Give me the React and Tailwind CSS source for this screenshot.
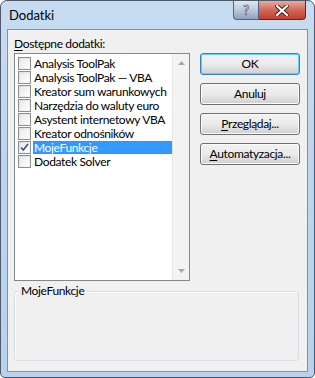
const items = [
  { name: "Analysis ToolPak", checked: false },
  { name: "Analysis ToolPak — VBA", checked: false },
  { name: "Kreator sum warunkowych", checked: false },
  { name: "Narzędzia do waluty euro", checked: false },
  { name: "Asystent internetowy VBA", checked: false },
  { name: "Kreator odnośników", checked: false },
  { name: "MojeFunkcje", checked: true, selected: true },
  { name: "Dodatek Solver", checked: false },
];

function Checkbox({ checked }) {
  return (
    <div className="w-[13px] h-[13px] border border-[#8f8f8f] bg-gradient-to-br from-[#dcdcdc] to-[#fbfbfb] flex items-center justify-center shrink-0">
      <div className="w-[9px] h-[9px] bg-gradient-to-br from-[#e9e9e9] to-[#ffffff] flex items-center justify-center">
        {checked && (
          <svg width="9" height="9" viewBox="0 0 9 9">
            <path d="M1 4.5 L3.3 7 L8 1" fill="none" stroke="#3c4f8c" strokeWidth="1.6" />
          </svg>
        )}
      </div>
    </div>
  );
}

function Button({ children, primary }) {
  return (
    <div
      className={
        "w-[100px] h-[22px] rounded-[3px] border flex items-center justify-center text-[12px] leading-[14px] text-black bg-gradient-to-b from-[#f2f2f2] via-[#ebebeb] to-[#cfcfcf] " +
        (primary ? "border-[#3c7fb1] shadow-[inset_0_0_0_1px_#5fd0f5]" : "border-[#707070] shadow-[inset_0_0_0_1px_#fbfbfb]")
      }
    >
      {children}
    </div>
  );
}

export default function App() {
  return (
    <div className="w-[315px] h-[378px] bg-white tracking-[-0.35px]" style={{ fontFamily: 'Lato, "Open Sans", sans-serif' }}>
      <div className="w-[315px] h-[378px] rounded-t-[7px] rounded-b-[5px] border border-[#4d5a69] bg-gradient-to-b from-[#c7dcf1] via-[#bcd4ec] to-[#b9d1ea] flex flex-col relative overflow-hidden">
        <div className="h-[28px] flex items-start pl-[8px] pt-[7px] text-[13px] leading-[14px] tracking-normal text-black">Dodatki</div>

        <div className="absolute top-0 right-[8px] flex">
          <div className="w-[26px] h-[19px] rounded-bl-[4px] border border-t-0 border-[#53647a] bg-gradient-to-b from-[#dfe8f2] via-[#b8c9dc] to-[#8aa3c0] flex items-center justify-center">
            <span className="text-[13px] font-bold text-white leading-none [-webkit-text-stroke:0.6px_#2d3c52]">?</span>
          </div>
          <div className="w-[47px] h-[19px] rounded-br-[4px] border border-t-0 border-l-0 border-[#5a2a2a] bg-gradient-to-b from-[#e9a99c] via-[#d2675a] to-[#c43d2a] flex items-center justify-center">
            <svg width="14" height="11" viewBox="0 0 14 11">
              <path d="M2 1 L12 10 M12 1 L2 10" stroke="#3a2020" strokeWidth="4" strokeLinecap="square" />
              <path d="M2 1 L12 10 M12 1 L2 10" stroke="#ffffff" strokeWidth="2.2" strokeLinecap="square" />
            </svg>
          </div>
        </div>

        <div className="mx-[6px] h-[343px] border border-[#8491a1] bg-[#f0f0f0] flex flex-col pl-[6px] pr-[7px]">
          <div className="h-[23px] pt-[7px] text-[12px] leading-[14px] text-black">
            <span className="underline underline-offset-2">D</span>ostępne dodatki:
          </div>
          <div className="flex gap-[10px]">
            <div className="w-[176px] h-[228px] border border-[#828790] bg-white flex">
              <div className="flex-1 pt-[2px] pl-[2px]">
                {items.map((it) => (
                  <div key={it.name} className="h-[14px] flex items-center">
                    <div className="w-[14px] flex justify-center">
                      <Checkbox checked={it.checked} />
                    </div>
                    <div
                      className={
                        "ml-[2px] flex-1 h-[13px] flex items-center pl-[1px] text-[12px] leading-[13px] whitespace-nowrap " +
                        (it.selected ? "bg-[#3399ff] text-white outline outline-1 outline-dotted outline-[#cc6633] -outline-offset-1" : "text-black")
                      }
                    >
                      {it.name}
                    </div>
                  </div>
                ))}
              </div>
              <div className="w-[17px] bg-[#f3f3f3] border-l border-[#e6e6e6] flex flex-col justify-between items-center py-[7px]">
                <svg width="7" height="4" viewBox="0 0 7 4"><path d="M0 4 L3.5 0 L7 4 Z" fill="#a8a8a8" /></svg>
                <svg width="7" height="4" viewBox="0 0 7 4"><path d="M0 0 L3.5 4 L7 0 Z" fill="#a8a8a8" /></svg>
              </div>
            </div>
            <div className="flex flex-col gap-[8px]">
              <Button primary>OK</Button>
              <Button>Anuluj</Button>
              <Button>
                <span><span className="underline underline-offset-2">P</span>rzeglądaj...</span>
              </Button>
              <Button>
                <span><span className="underline underline-offset-2">A</span>utomatyzacja...</span>
              </Button>
            </div>
          </div>
          <div className="relative mt-[10px] w-[285px] h-[70px] rounded-[3px] border border-[#d5dfe5] shadow-[inset_1px_1px_0_#ffffff]">
            <div className="absolute -top-[8px] left-[4px] px-[2px] bg-[#f0f0f0] text-[12px] leading-[14px] text-black">MojeFunkcje</div>
          </div>
        </div>
      </div>
    </div>
  );
}
